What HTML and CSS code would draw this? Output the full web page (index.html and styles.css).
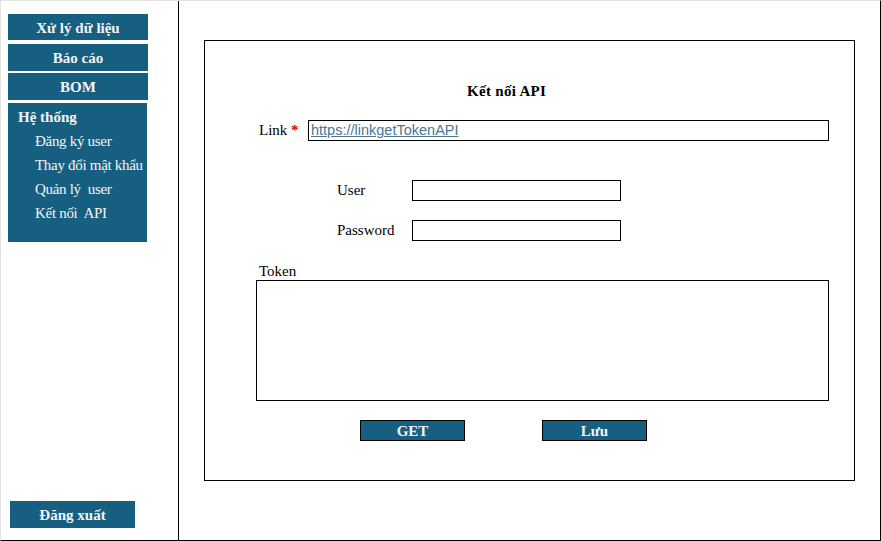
FILE: index.html
```html
<!DOCTYPE html>
<html>
<head>
<meta charset="utf-8">
<link rel="stylesheet" href="styles.css">
</head>
<body>
<div class="frame">
  <aside class="sidebar">
    <div class="menu-btn m1">Xử lý dữ liệu</div>
    <div class="menu-btn m2">Báo cáo</div>
    <div class="menu-btn m3">BOM</div>
    <div class="panel">
      <div class="panel-title">Hệ thống</div>
      <div class="panel-item">Đăng ký user</div>
      <div class="panel-item">Thay đổi mật khẩu</div>
      <div class="panel-item">Quản lý&nbsp; user</div>
      <div class="panel-item">Kết nối&nbsp; API</div>
    </div>
    <div class="logout">Đăng xuất</div>
  </aside>
  <main class="main">
    <section class="card">
      <h1 class="title">Kết nối API</h1>
      <div class="row link-row">
        <span class="lbl link-lbl">Link <span class="req">*</span></span>
        <div class="field link-field"><span class="link-text">https://linkgetTokenAPI</span></div>
      </div>
      <div class="row user-row">
        <span class="lbl cred-lbl">User</span>
        <div class="field cred-field"></div>
      </div>
      <div class="row pass-row">
        <span class="lbl cred-lbl">Password</span>
        <div class="field cred-field"></div>
      </div>
      <div class="token-lbl">Token</div>
      <div class="field token-area"></div>
      <div class="actions">
        <div class="btn">GET</div>
        <div class="btn">Lưu</div>
      </div>
    </section>
  </main>
</div>
</body>
</html>
```

FILE: styles.css
```css
* { box-sizing: border-box; }
html, body { margin: 0; padding: 0; background: #fff; }
body {
  font-family: "Liberation Serif", "Times New Roman", serif;
  font-size: 15px;
  color: #000;
}
.frame {
  width: 881px;
  height: 541px;
  display: flex;
  border-top: 1px solid #e3e3e3;
  border-left: 1px solid #e3e3e3;
  border-right: 1px solid #000;
  border-bottom: 1px solid #000;
}
.sidebar {
  width: 178px;
  border-right: 1px solid #000;
  padding: 13px 0 12px 7px;
  display: flex;
  flex-direction: column;
}
.menu-btn {
  width: 140px;
  background: #175f80;
  color: #f4f4f4;
  font-weight: bold;
  text-align: center;
}
.m1 { height: 26px; line-height: 28px; }
.m2 { height: 27px; line-height: 29px; margin-top: 4px; }
.m3 { height: 27px; line-height: 29px; margin-top: 2px; }
.panel {
  width: 139px;
  height: 139px;
  margin-top: 3px;
  background: #175f80;
  color: #f4f4f4;
  padding-top: 2px;
  white-space: nowrap;
}
.panel-title {
  font-weight: bold;
  line-height: 24px;
  padding-left: 10px;
}
.panel-item {
  line-height: 24px;
  padding-left: 27px;
  letter-spacing: -0.3px;
}
.panel-item:nth-child(2) { padding-top: 1px; line-height: 23px; }
.logout {
  margin-top: auto;
  margin-left: 2px;
  width: 125px;
  height: 27px;
  line-height: 29px;
  background: #175f80;
  color: #f4f4f4;
  font-weight: bold;
  text-align: center;
}
.main {
  flex: 1;
  padding: 39px 0 0 25px;
}
.card {
  width: 651px;
  height: 441px;
  border: 1px solid #000;
}
.title {
  margin: 0;
  font-size: 15px;
  font-weight: bold;
  padding: 40px 0 0 262px;
  line-height: 20px;
  letter-spacing: 0.3px;
}
.row {
  display: flex;
  align-items: center;
}
.lbl { line-height: 21px; }
.field {
  border: 1px solid #000;
  background: #fff;
}
.link-row { margin-top: 19px; }
.link-lbl { width: 103px; padding-left: 54px; }
.req { color: #e00000; font-weight: bold; }
.link-field {
  width: 521px;
  height: 21px;
  padding-left: 2px;
  font-family: "Liberation Sans", Arial, sans-serif;
  font-size: 14.5px;
  line-height: 19px;
}
.link-text {
  color: #4a7692;
  text-decoration: underline;
}
.user-row { margin-top: 39px; }
.pass-row { margin-top: 19px; }
.cred-lbl { width: 207px; padding-left: 132px; }
.cred-field { width: 209px; height: 21px; }
.token-lbl {
  margin-top: 21px;
  padding-left: 54px;
  line-height: 18px;
}
.token-area {
  margin-left: 51px;
  width: 573px;
  height: 121px;
}
.actions {
  display: flex;
  gap: 77px;
  padding-left: 155px;
  margin-top: 19px;
}
.btn {
  width: 105px;
  height: 21px;
  line-height: 20px;
  border: 1px solid #000;
  background: #175f80;
  color: #f4f4f4;
  font-weight: bold;
  text-align: center;
}
```
